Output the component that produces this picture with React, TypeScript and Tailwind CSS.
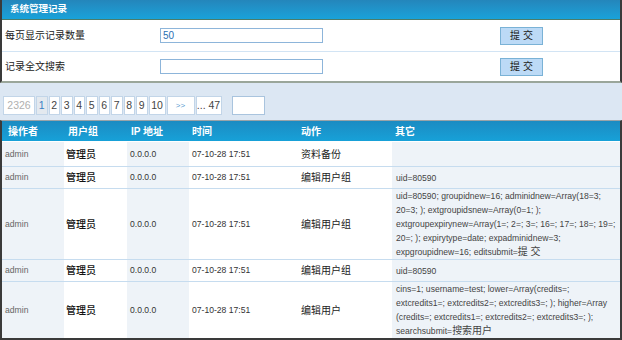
import React from 'react';

const font = { fontFamily: '"Liberation Sans", "Noto Sans CJK SC", sans-serif' };

const Cn: React.FC<{ children: React.ReactNode }> = ({ children }) => (
  <span className="text-[10px]">{children}</span>
);

const pages = ['1', '2', '3', '4', '5', '6', '7', '8', '9'];

type Row = { h: string; action: string; other: React.ReactNode };

const rows: Row[] = [
  { h: 'h-[25px]', action: '资料备份', other: null },
  { h: 'h-[22px]', action: '编辑用户组', other: 'uid=80590' },
  {
    h: 'h-[71px]',
    action: '编辑用户组',
    other: (
      <>
        uid=80590; groupidnew=16; adminidnew=Array(18=3;
        <br />
        20=3; ); extgroupidsnew=Array(0=1; );
        <br />
        extgroupexpirynew=Array(1=; 2=; 3=; 16=; 17=; 18=; 19=;
        <br />
        20=; ); expirytype=date; expadminidnew=3;
        <br />
        expgroupidnew=16; editsubmit=<Cn>提 交</Cn>
      </>
    ),
  },
  { h: 'h-[22px]', action: '编辑用户组', other: 'uid=80590' },
  {
    h: 'h-[56px]',
    action: '编辑用户',
    other: (
      <>
        cins=1; username=test; lower=Array(credits=;
        <br />
        extcredits1=; extcredits2=; extcredits3=; ); higher=Array
        <br />
        (credits=; extcredits1=; extcredits2=; extcredits3=; );
        <br />
        searchsubmit=<Cn>搜索用户</Cn>
      </>
    ),
  },
];

const cols = 'grid grid-cols-[62px_63px_62px_109px_94px_1fr]';
const box = 'h-[19px] border border-[#c2d5e8] flex items-center justify-center whitespace-nowrap';

export default function App() {
  return (
    <div className="w-[622px] h-[340px] bg-white overflow-hidden" style={font}>
      {/* settings panel */}
      <div className="border-x-2 border-[#3a3a3a] border-b-2 border-b-[#9aa69a]">
        <div className="h-[20px] flex items-center pl-[8px] bg-gradient-to-b from-[#2486bb] to-[#18a2da] border-b border-[#4c7c6a]">
          <span className="text-[9.5px] font-bold text-white">系统管理记录</span>
        </div>
        <div className="h-[32px] flex items-center border-b border-[#d2e4f4]">
          <span className="w-[158px] pl-[3px] text-[10px] text-[#222]">每页显示记录数量</span>
          <div className="w-[163px] h-[15px] border border-[#8db5da] flex items-center px-[2px] text-[10px] text-[#2c6fb3]">50</div>
          <div className="flex-1" />
          <button className="mr-[77px] w-[43px] h-[18px] bg-[#bcdaf6] border border-[#7ab2d6] text-[10px] text-[#222]">提 交</button>
        </div>
        <div className="h-[29px] flex items-center">
          <span className="w-[158px] pl-[3px] text-[10px] text-[#222]">记录全文搜索</span>
          <div className="w-[163px] h-[15px] border border-[#8db5da]" />
          <div className="flex-1" />
          <button className="mr-[77px] w-[43px] h-[18px] bg-[#bcdaf6] border border-[#7ab2d6] text-[10px] text-[#222]">提 交</button>
        </div>
      </div>

      {/* pagination */}
      <div className="h-[37px] bg-[#dce7f3] pt-[13px] pl-[3px] flex items-start text-[10.5px]">
        <div className="flex gap-px">
          <div className={`${box} w-[32px] bg-white text-[#b0b0b0]`}>2326</div>
          {pages.map((p) => (
            <div
              key={p}
              className={
                p === '1'
                  ? `${box} w-[11.5px] bg-[#e3e9ef] text-[#3b7fc4]`
                  : `${box} w-[11.5px] bg-white text-[#444]`
              }
            >
              {p}
            </div>
          ))}
          <div className={`${box} w-[17px] bg-white text-[#444]`}>10</div>
          <div className={`${box} w-[28px] bg-white text-[#5a9ad0] text-[8px]`}>&gt;&gt;</div>
          <div className={`${box} w-[26px] bg-white text-[#444]`}>... 47</div>
        </div>
        <div className="ml-[10px] w-[33px] h-[19px] border border-[#a9c4de] bg-white" />
      </div>

      {/* log table */}
      <div className="border-x-2 border-[#3a3a3a] border-b-2 border-b-[#3a3a3a] border-t border-t-[#9aa3a8]">
        <div className={`${cols} h-[21px] bg-gradient-to-b from-[#1b8bc2] to-[#17a1d8] border-b border-white text-[10px] font-bold text-white`}>
          <div className="pl-[6px] flex items-center">操作者</div>
          <div className="pl-[4px] flex items-center">用户组</div>
          <div className="pl-[4px] flex items-center">IP 地址</div>
          <div className="pl-[3px] flex items-center">时间</div>
          <div className="pl-[3px] flex items-center">动作</div>
          <div className="pl-[3px] flex items-center">其它</div>
        </div>
        {rows.map((r, i) => (
          <div
            key={i}
            className={`${cols} ${r.h} ${i < rows.length - 1 ? 'border-b border-[#c6dcef]' : ''} text-[8.6px]`}
          >
            <div className="bg-[#eef3f8] pl-[3px] flex items-center text-[#666]">admin</div>
            <div className="pl-[2px] flex items-center text-[10px] text-[#111] font-medium">管理员</div>
            <div className="bg-[#eef3f8] pl-[3px] flex items-center text-[#333]">0.0.0.0</div>
            <div className="pl-[3px] flex items-center text-[#333]">07-10-28 17:51</div>
            <div className="pl-[3px] flex items-center text-[10px] text-[#222]">{r.action}</div>
            <div className="bg-[#eef3f8] pl-[4px] flex items-center text-[#444] leading-[14px] whitespace-nowrap">
              <div>{r.other}</div>
            </div>
          </div>
        ))}
      </div>
    </div>
  );
}
